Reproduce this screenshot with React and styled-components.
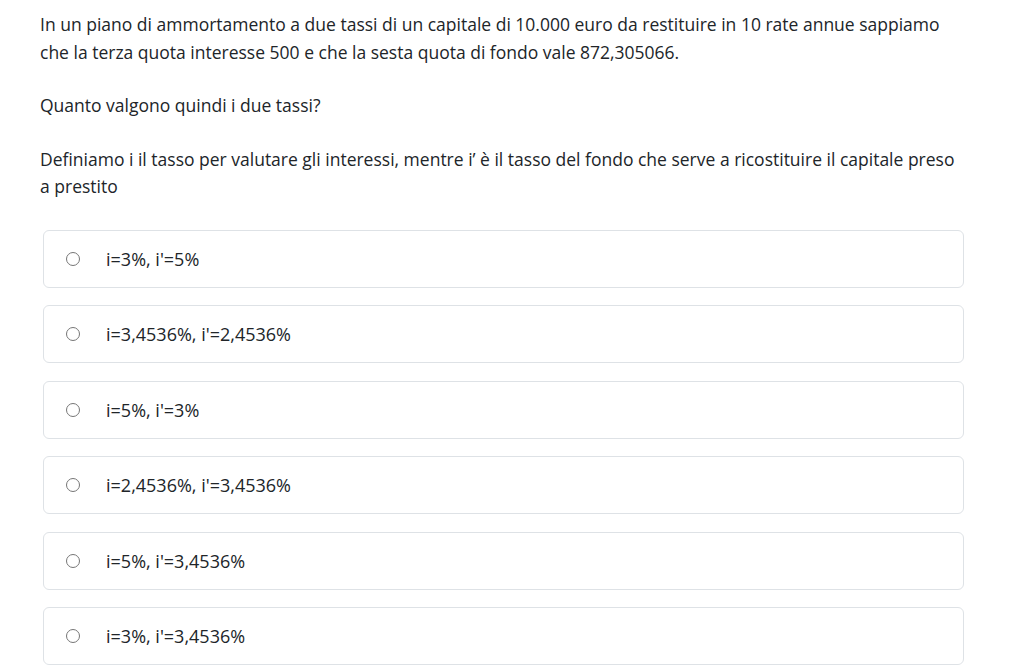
import { createGlobalStyle, styled } from "styled-components";

const GlobalStyle = createGlobalStyle`
    body{
        margin:0;
        background:#fff;
        font-family:"Open Sans", "Noto Sans", sans-serif;
        color:#212529;
    }
`

const options = [
    "i=3%, i'=5%",
    "i=3,4536%, i'=2,4536%",
    "i=5%, i'=3%",
    "i=2,4536%, i'=3,4536%",
    "i=5%, i'=3,4536%",
    "i=3%, i'=3,4536%",
]

const App = () => {
    return (<Wrapper>
        <GlobalStyle />
        <Question>
            <p>In un piano di ammortamento a due tassi di un capitale di 10.000 euro da restituire in 10 rate annue sappiamo che la terza quota interesse 500 e che la sesta quota di fondo vale 872,305066.</p>
            <p>Quanto valgono quindi i due tassi?</p>
            <p>Definiamo i il tasso per valutare gli interessi, mentre i’ è il tasso del fondo che serve a ricostituire il capitale preso a prestito</p>
        </Question>
        <Options>
            {options.map((item, index)=>{
                return <Option key={index}>
                    <Radio type="radio" name="answer" />
                    <span>{item}</span>
                </Option>
            })}
        </Options>
    </Wrapper>)
}

const Wrapper = styled.div`
    padding:11px 0 0 40px;
    width:924px;
`

const Question = styled.div`
    font-size:17.5px;
    line-height:27.5px;

    p{
        margin:0 0 26px 0;
    }
`

const Options = styled.div`
    display:flex;
    flex-direction:column;
    gap:17.6px;
    margin:0 0 0 3px;
    padding-top:3px;
`

const Option = styled.label`
    display:flex;
    align-items:center;
    height:56px;
    border:1px solid #dee2e6;
    border-radius:6px;
    padding-left:22px;
    font-size:18px;

    span{
        margin-left:26px;
    }
`

const Radio = styled.input`
    width:14px;
    height:14px;
    margin:0;
    accent-color:#0d6efd;
`

export default App
